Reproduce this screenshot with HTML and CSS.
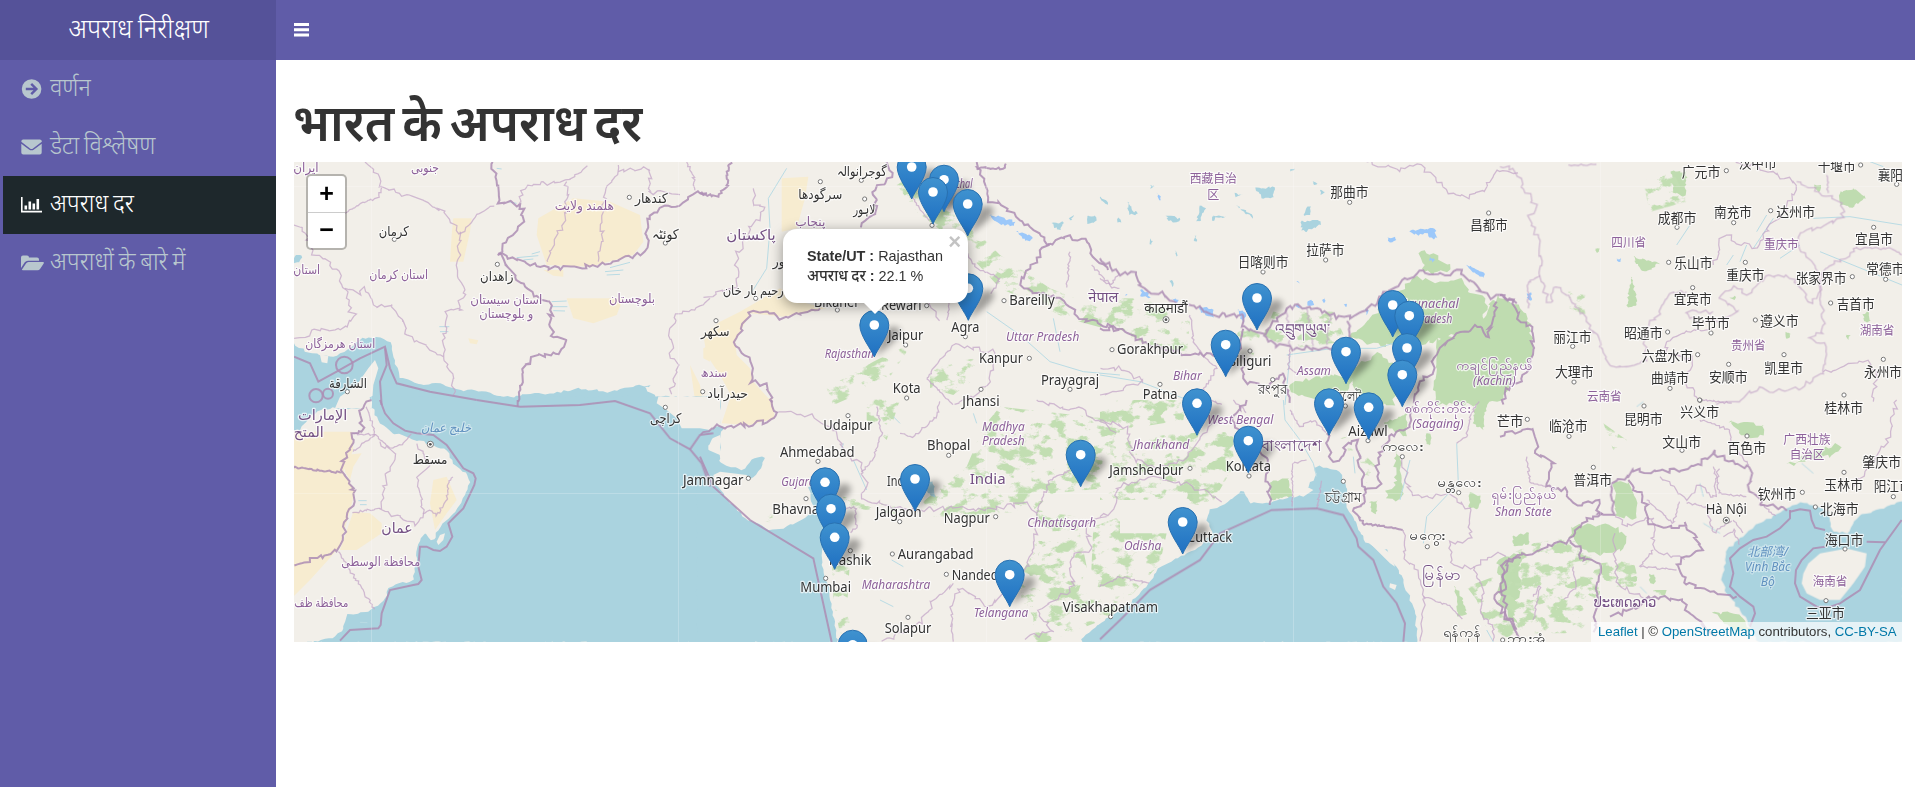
FILE: index.html
```html
<!DOCTYPE html>
<html lang="hi">
<head>
<meta charset="utf-8">
<title>अपराध निरीक्षण</title>
<link rel="stylesheet" href="styles.css">
</head>
<body>
<header class="topbar">
  <a class="logo"><span class="fit fit-logo">अपराध निरीक्षण</span></a>
  <nav class="navbar">
    <svg class="burger" width="15" height="14" viewBox="0 0 15 14"><path d="M0 0h15v3H0zM0 5.3h15v3H0zM0 10.6h15v3H0z"/></svg>
  </nav>
</header>
<div class="body">
  <aside class="sidebar">
    <a class="item">
      <svg class="ico" width="24" height="20" viewBox="0 0 24 20"><circle cx="10.6" cy="10" r="9.8" fill="currentColor"/><path d="M4.8 10h10M10.2 4.8l5.2 5.2-5.2 5.2" fill="none" stroke="#605ca8" stroke-width="2.4"/></svg>
      <span class="fit">वर्णन</span>
    </a>
    <a class="item">
      <svg class="ico" width="24" height="20" viewBox="0 0 24 20"><path fill="currentColor" d="M2.2 2.5h16.6a2 2 0 0 1 2 1.6v.6L12 11.4q-1.5 1-3 0L.3 4.8q0-2.3 1.9-2.3zM.3 6.8l7.7 5.6q2.5 1.7 5 0l7.7-5.6v8.6q0 2-2 2H2.3q-2 0-2-2z"/></svg>
      <span class="fit">डेटा विश्लेषण</span>
    </a>
    <a class="item active">
      <svg class="ico" width="24" height="20" viewBox="0 0 24 20"><path fill="currentColor" d="M0 2h1.600v13.800H21v1.600H0zM3.500 10.500h2.600v4H3.500zM7.500 6.500h2.600v8H7.500zM11.500 8.500h2.600v6h-2.600zM15.500 4h2.600v10.500h-2.600z"/></svg>
      <span class="fit">अपराध दर</span>
    </a>
    <a class="item">
      <svg class="ico" width="24" height="20" viewBox="0 0 24 20"><path fill="currentColor" d="M0 15V4.500Q0 2.500 2 2.500h4q2 0 2 2h8q2 0 2 2v1.300H7q-2 0-3.200 1.500zM1 16.500l4-6Q5.800 9 7.500 9h14.700q1.200.3.500 1.500l-3.500 5.300q-1 1.500-2.700 1.500H2Q.5 17.300 1 16.500z"/></svg>
      <span class="fit">अपराधों के बारे में</span>
    </a>
  </aside>
  <main class="content">
    <h1><span class="fit fit-h">भारत के अपराध दर</span></h1>
    <div class="map">
      <svg class="canvas" viewBox="294 162 1608 480" width="1608" height="480">
        <defs>
          <filter id="forest" x="294" y="162" width="1608" height="480" filterUnits="userSpaceOnUse" color-interpolation-filters="sRGB"><feTurbulence type="fractalNoise" baseFrequency=".06 .085" numOctaves="5" seed="11"/><feColorMatrix values="0 0 0 0 .76  0 0 0 0 .87  0 0 0 0 .7  9 0 0 0 -4.6"/><feComposite operator="in" in2="SourceGraphic"/></filter>
          <filter id="soft" x="-60%" y="-60%" width="220%" height="220%"><feGaussianBlur stdDeviation="3.2"/></filter>
          <linearGradient id="pin" x1="0" y1="0" x2="0" y2="1"><stop offset="0" stop-color="#3f92cf"/><stop offset="1" stop-color="#1f70c2"/></linearGradient>
        </defs>
        <rect class="land" x="294" y="162" width="1608" height="480"/>
        <g id="terrain"></g>
        <g id="forests" filter="url(#forest)"></g>
        <g id="water"></g>
        <g id="lines"></g>
        <path class="grid" d="M371.500 162v480M678.500 162v480M986.500 162v480M1293.500 162v480M1600.500 162v480M294 186.500h1608M294 493.500h1608"/>
        <g id="labels"></g>
        <g id="pins"></g>
      </svg>
      <div class="zoom"><a>+</a><a>−</a></div>
      <div class="popup">
        <span class="close">×</span>
        <div><b>State/UT :</b> Rajasthan</div>
        <div><b class="hi">अपराध दर</b> <b>:</b> 22.1 %</div>
        <i class="tip"></i>
      </div>
      <div class="credit"><a>Leaflet</a> | © <a>OpenStreetMap</a> contributors, <a>CC-BY-SA</a></div>
    </div>
  </main>
</div>
<script src="map.js"></script>
</body>
</html>
```
FILE: styles.css
```css
* { box-sizing: border-box; }
body { margin: 0; height: 787px; overflow: hidden; display: flex; flex-direction: column; background: #fff; font-family: "Liberation Sans", "Noto Sans Devanagari", "Noto Sans", sans-serif; color: #333; }
.topbar { display: flex; height: 60px; background: #605ca8; flex: none; }
.logo { width: 276px; background: #555299; color: #fff; display: flex; justify-content: center; align-items: center; font-size: 27px; line-height: 40px; padding-left: 2px; }
.navbar { flex: 1; padding: 23px 18px; }
.burger { display: block; fill: #fff; }
.body { display: flex; flex: 1; }
.sidebar { width: 276px; background: #605ca8; color: #b8c7ce; font-size: 25px; line-height: 40px; }
.item { display: flex; align-items: center; height: 58px; border-left: 3px solid transparent; padding-left: 18px; gap: 5px; white-space: nowrap; }
.item.active { background: #1e282c; color: #fff; border-left-color: #605ca8; }
.ico { flex: none; margin-top: -1px; }
.fit { display: inline-block; white-space: nowrap; font-weight: 300; word-spacing: -2px; transform-origin: 0 50%; transform: translateY(-2.500px) scaleX(.938); }
.fit-logo { transform-origin: 50% 50%; transform: translateY(-1px) scaleX(.952); }
.content { flex: 1; padding: 0 13px 0 18px; }
h1 { margin: 0; height: 102px; padding: 30px 0 0; font-size: 52px; line-height: 66px; color: #333; }
.fit-h { font-weight: 600; word-spacing: -6px; transform: translateX(-1px) scaleX(.943); }
.map { position: relative; width: 1608px; height: 480px; overflow: hidden; }
.canvas { display: block; }
.land { fill: #f2efe9; }
.sand { fill: #f7ecd0; }
.wood { fill: #bfdcb0; }
.sea { fill: #aad3df; }
.isle { fill: #f2efe9; }
.ice { fill: #9cc8fa; }
.river { fill: none; stroke: #b9dbe4; stroke-width: 3; }
.thin { fill: none; stroke: #c4a7c8; stroke-width: 3.800; opacity: .75; }
.bold { fill: none; stroke: #ad8db4; stroke-width: 6; opacity: .85; }
.grid { fill: none; stroke: #fff; opacity: .22; }
text { text-anchor: middle; paint-order: stroke; stroke: rgba(255,255,255,.7); stroke-width: 2.500px; stroke-linejoin: round; fill: #333; font-family: "Noto Sans", "DejaVu Sans", "Noto Sans CJK SC", sans-serif; font-size: 13.500px; }
.st { fill: #8d619a; font-size: 12.500px; }
.it { fill: #8d619a; font-size: 12.500px; font-style: italic; }
.ct { fill: #745084; font-size: 14.500px; }
.wa { fill: #6292c0; font-size: 12.500px; font-style: italic; stroke: rgba(255,255,255,.4); }
.dot { fill: #fff; stroke: #777; stroke-width: 1; }
.cap { fill: #555; }
.pin { fill: url(#pin); stroke: #2870b0; stroke-width: 1; }
.hole { fill: #fff; }
.shade { fill: #000; opacity: .34; }
.zoom { position: absolute; left: 12px; top: 12px; width: 41px; height: 76px; border: 2px solid rgba(0,0,0,.25); border-radius: 5px; background: #fff; background-clip: padding-box; display: flex; flex-direction: column; font: bold 25px/35px "Liberation Sans", sans-serif; color: #000; text-align: center; }
.zoom a { flex: 1; }
.zoom a + a { border-top: 1px solid #ccc; line-height: 33px; }
.popup { position: absolute; left: 489px; top: 67px; width: 185px; height: 74px; background: #fff; border-radius: 14px; box-shadow: 0 3px 14px rgba(0,0,0,.4); padding: 17px 0 0 24px; font-size: 14.400px; line-height: 20px; white-space: nowrap; }
.popup div { position: relative; z-index: 1; height: 20px; }
.hi { font-weight: 500; font-size: 15.200px; word-spacing: -1px; }
.close { position: absolute; right: 7px; top: 3px; font: bold 22px/20px "Liberation Sans", sans-serif; color: #c3c3c3; }
.tip { position: absolute; left: 80px; top: 73px; width: 24px; height: 12px; background: #fff; clip-path: polygon(0 0, 100% 0, 50% 100%); }
.credit { position: absolute; right: 0; bottom: 0; height: 20px; width: 311px; padding: 0 0 0 7px; background: rgba(255,255,255,.7); font-size: 13.200px; line-height: 19px; white-space: nowrap; }
.credit a { color: #0078a8; }
```
FILE: map.js
```js
// Each sheet has its own origin on the map; its coordinates are thirds of a pixel.
const sheets = [
{ o: [290, 155],
  sea: ["0,560 60,595 130,605 180,580 215,550 265,548 300,560 315,620 330,665 400,690 450,685 520,705 590,710 650,735 700,715 790,715 870,700 960,712 1050,690 1095,720 1110,760 0,760", "1080,690 1070,700 1050,700", "12,305 35,300 30,320 12,325"],
  isle: ["135,760 150,725 200,690 235,640 255,615 265,640 250,690 245,760", "90,600 115,602 112,625 95,622"],
  sand: ["745,190 850,130 960,140 1050,180 1060,260 1030,300 900,335 770,330 740,240", "490,190 545,190 540,230 520,320 480,320 485,240", "760,345 820,345 820,365 790,362", "830,430 1000,430 980,480 910,505 850,490", "1240,580 1260,570 1260,620 1240,610", "535,550 565,556 560,568 540,565", "1200,630 1230,690 1240,750 1215,735"],
  river: ["680,308 745,302 M700,315 730,312 M945,350 1000,345 M950,360 990,358 M960,338 1020,322 M785,440 830,438 M785,455 832,455 M790,467 825,468 M448,515 478,515 M450,530 475,530 M620,40 635,42 M655,140 680,145 M725,297 750,290"],
  bold: ["608,21 625,140 695,150 700,200 625,295 755,340 890,335 970,320 1070,290 1075,190 1110,160 1185,145 1215,115 1260,115", "625,295 680,370 720,415 780,440 785,540 825,545 815,590 740,605 700,635 683,750"],
  mar: ["12,605 60,625 85,680 140,650 210,610 285,575 300,640 320,685 420,710 560,735", "285,580 290,630 270,680 275,750"],
  rings: [[163,630,25],[78,722,20],[114,716,15]],
  thin: ["225,21 275,80 275,98 390,130 470,180 510,230 545,210 560,180 620,150", "275,98 265,130 225,140 165,175", "510,230 505,350 525,420 505,440 515,465 465,465 465,560 460,600 490,660 490,730", "12,210 40,220 75,300 110,310 140,350 165,400 180,470 200,480 165,520 60,525 50,545 12,550", "165,400 210,415 225,400 240,440 260,455 300,445 320,480 345,500 350,540 460,605", "685,150 690,120 715,90 830,80 850,70 900,25", "830,80 830,190 800,240 770,330", "985,30 975,80 945,100 935,250 925,320", "985,50 1080,40 1085,70 1070,100 1080,110 1180,120", "1190,21 1210,60 1215,110", "1260,430 1220,460 1160,480 1140,530 1145,600 1165,640 1145,700 1145,725"],
  t: [[48,36,76,"ایران","st"],[405,36,84,"جنوبی","st"],[311,228,90,"کرمان"],[326,358,176,"استان کرمان","st"],[50,343,80,"استان","st"],[883,152,178,"هلمند ولایت","st"],[1084,130,98,"کندهار"],[1126,237,80,"کوئٹہ"],[620,364,100,"زاهدان"],[649,432,216,"استان سیستان","st"],[649,475,162,"و بلوچستان","st"],[1026,430,138,"بلوچستان","st"],[151,564,210,"استان هرمزگان","st"],[174,684,114,"الشارقة"]],
  d: [[313,253],[1018,127],[1126,264],[622,328],[172,710]] },
{ o: [290, 400],
  sea: ["240,-10 260,60 300,95 370,120 420,130 470,150 490,190 535,225 540,250 520,300 480,350 450,380 430,425 405,400 385,425 375,500 370,540 300,560 275,610 240,635 170,645 160,690 120,715 50,728 1290,728 1290,-10", "0,-10 150,-10 100,25 60,50 30,90 0,95"],
  isle: ["1105,-10 1100,10 1130,30 1160,55 1175,85 1230,85 1290,95 1290,-10", "465,400 460,420 445,435 440,425 450,405", "1255,120 1290,105 1290,165 1255,150"],
  sand: ["0,95 185,95 190,150 160,215 195,275 150,440 60,540 0,600", "190,335 240,340 275,370 275,400 200,450 150,450", "430,240 470,230 500,300 470,340 435,390 420,310", "165,165 215,160 190,200 180,240 165,215"],
  river: ["205,302 230,302 M210,314 230,314 M210,667 232,668"],
  bold: ["245,0 205,30 220,90 185,105 190,130 160,180 160,215 195,275 145,450 12,497", "12,203 160,218"],
  mar: ["270,0 285,40 310,70 345,92 380,100 430,105 470,135 495,170 520,205 550,220 557,235 553,255 520,325 475,370 487,410 470,440 450,453 430,450 410,440 390,440 385,500 395,540 385,552 370,555 300,570 275,640 272,675 265,685 180,690 150,722", "560,0 690,20 870,15 975,3 1080,40 1140,115 1200,148 1235,190 1260,260", "683,20 683,0", "1200,148 1230,105 1270,100"],
  thin: ["230,20 255,100 300,145 340,130 365,100", "190,155 255,105 185,100", "270,125 320,165 290,230 270,330 380,372 398,335 385,230 420,195 380,130", "270,325 185,338", "398,340 420,330 440,345 470,300 475,240 490,230", "145,455 255,630"],
  t: [[98,45,148,"الإمارات","ct"],[56,97,90,"المتح","ct"],[468,82,150,"خليج عمان","wa"],[420,177,104,"مسقط"],[321,386,94,"عمان","ct"],[272,484,236,"محافظة الوسطى","st"],[94,607,162,"محافظة ظف","st"],[1127,56,94,"کراچی"],[1270,240,182,"Jamnagar"]],
  d: [[1126,22],[1375,235]], cap: [[421,133]] },
{ o: [700, 155],
  sand: ["245,70 325,65 315,130 290,220 245,230", "120,470 240,400 300,440 380,460 250,485 150,475 105,560 110,600 150,640 160,680 210,735 215,752 110,752 60,660 20,600 10,540 60,500"],
  haze: ["590,90 640,60 800,200 900,300 1050,400 1250,480 1250,530 1100,490 900,400 780,270 650,170", "690,650 760,620 830,610 850,650 760,720 690,700", "380,700 520,620 640,560 560,680 400,750"],
  ice: ["870,180 900,185 945,200 940,215 890,205", "950,230 1000,245 990,260 960,245"],
  sea: ["1055,205 1090,200 1080,222 1060,220", "1160,185 1185,180 1190,200 1165,205", "1105,190 1120,180 1115,200"],
  river: ["260,40 205,130 210,220 200,340 150,420 M540,330 640,300 M860,470 960,540 1050,620 1150,650 1260,660 M1060,490 1080,590"],
  bold: ["0,115 50,125 80,100 85,30 100,21", "560,21 580,65 520,105 530,170 480,220", "360,460 250,490 200,470 150,475 100,570 150,610 155,680 200,690 220,750", "830,21 870,150 900,145 960,190 1030,250 1050,270 1090,240 1160,260 1180,310 1230,350", "1045,265 970,370 965,400 1080,430 1150,490 1260,525", "830,40 910,40 920,21"],
  thin: ["160,100 160,150 200,160 150,220 110,300 110,400 0,430", "560,290 620,340 700,460 720,500", "780,270 830,340 900,370 870,420", "760,570 880,590 870,680 830,720 760,750", "700,400 750,440 740,500", "760,570 700,640 680,670 760,750", "1110,290 1100,400", "1175,330 1240,400 1260,400", "600,60 640,130 690,200"],
  t: [[485,48,150,"گوجرانوالہ"],[361,118,132,"سرگودھا"],[493,163,66,"لاہور"],[331,199,90,"پنجاب","st"],[153,241,148,"پاکستان","ct"],[236,318,36,"ور"],[160,406,184,"رحیم یار خان"],[410,441,136,"Bikaner"],[604,452,122,"Rewari"],[46,530,86,"سکھر"],[42,653,80,"سندھ","st"],[83,715,122,"حیدرآباد"],[996,437,136,"Bareilly"],[796,517,84,"Agra"],[617,541,106,"Jaipur"],[448,595,148,"Rajasthan","it"],[1028,545,220,"Uttar Pradesh","it"],[903,611,132,"Kanpur"],[1110,676,174,"Prayagraj"],[620,700,84,"Kota"],[843,739,112,"Jhansi"],[1210,428,90,"नेपाल","ct"],[760,86,116,"Himachal","it"]],
  d: [[361,80],[484,76],[494,132],[696,211],[412,465],[680,452],[48,497],[8,710],[912,437],[796,545],[617,570],[988,610],[1110,703],[620,729],[843,703],[167,430]] },
{ o: [700, 400],
  sea: ["-10,105 20,100 50,75 75,85 40,110 20,140 45,175 80,200 130,210 160,175 200,170 175,215 145,240 60,240 75,290 130,350 210,390 260,380 320,350 345,335 325,260 345,240 420,260 370,330 400,400 370,440 365,500 385,560 400,640 415,728 -10,728", "1150,728 1145,715 1190,680 1230,655 1260,645 1260,728", "680,240 700,245 705,290 680,280"],
  isle: ["60,215 140,225 150,245 120,265 75,285 45,250 40,225"],
  sand: ["90,-5 215,-5 225,55 150,75 65,70"],
  haze: ["430,290 640,330 700,280 800,200 850,80 900,20 1260,60 1260,260 1060,280 1000,330 800,350 650,350 430,320", "395,430 450,480 440,640 470,726 425,726 400,600", "500,-20 600,0 560,120 500,60", "180,340 240,345 220,370 180,360", "1000,600 1230,560 1260,640 1040,726 1000,726", "1010,330 1130,350 1160,500 1120,620 1000,650 940,560 1000,460", "1180,380 1260,350 1260,600 1170,600"],
  river: ["460,180 500,270 M540,600 580,620 M575,480 610,500 M430,130 420,170 M820,40 830,70 M580,50 600,70"],
  bold: ["215,0 230,60 140,75 40,80 0,105"],
  mar: ["0,170 40,260 150,360 340,475 395,726"],
  thin: ["230,38 330,45 400,80 430,150 480,190 500,250 480,290 540,310 620,330 760,325 830,330 980,310 1010,340 1000,460 960,530 870,620 780,560 750,640 760,726", "530,20 545,100 520,180 480,220", "760,550 700,600 660,670 600,700 540,726", "600,100 640,110 710,50 720,0", "1010,340 1050,240 1110,210", "1220,350 1160,370 1170,450 1110,470 1120,560 1010,640 1060,690 970,720", "1010,0 1080,20 1150,30 1250,100", "420,330 465,320 470,380 450,400"],
  t: [[444,77,148,"Udaipur"],[352,158,224,"Ahmedabad"],[300,243,112,"Gujarat","it"],[746,136,130,"Bhopal"],[910,78,128,"Madhya","it"],[910,121,128,"Pradesh","it"],[863,237,108,"India","ct"],[319,327,204,"Bhavnagar"],[612,243,102,"Indore"],[596,338,138,"Jalgaon"],[800,354,138,"Nagpur"],[1085,368,206,"Chhattisgarh","it"],[707,464,228,"Aurangabad"],[450,480,128,"Nashik"],[825,526,140,"Nanded"],[377,563,152,"Mumbai"],[588,552,206,"Maharashtra","it"],[624,685,140,"Solapur"],[903,636,164,"Telangana","it"],[1231,621,286,"Visakhapatnam"]],
  d: [[444,47],[354,184],[746,166],[318,296],[599,365],[887,350],[577,462],[451,452],[739,523],[377,535],[624,652],[1232,650]] },
{ o: [1100, 155],
  sea: ["465,100 525,95 520,125 490,130", "605,200 660,195 665,205 620,230 605,225", "200,180 240,190 240,202 205,198", "300,150 315,160 300,200 290,200", "340,180 380,185 350,190 335,197", "85,140 95,170 115,172 105,180 85,178", "410,150 455,180 460,190 430,170", "620,155 635,152 628,180 610,185", "0,128 20,135 25,148 5,138", "150,250 158,265 150,270", "285,240 292,260 283,262", "210,375 222,380 220,395", "225,285 232,300 227,303", "405,115 430,120 408,125", "570,42 585,45 572,50", "640,80 652,84 645,92", "660,105 675,110 665,118", "55,185 62,200 52,205", "150,90 165,92 152,100"],
  ice: ["930,225 1005,220 1010,250 990,250 985,235 950,240 935,235", "865,250 890,245 885,258 865,260", "1100,330 1155,355 1150,368 1115,350", "300,455 340,465 340,490 300,470", "990,305 1005,312 1000,322 990,316", "620,440 640,435 640,450 620,455", "220,430 235,430 232,445 220,442", "170,115 185,120 180,138", "120,400 145,415 150,430 125,425", "795,460 805,460 800,480", "730,445 740,445 738,458", "665,435 678,430 672,443", "415,465 438,470 430,505 420,480", "580,450 600,450 598,462", "588,376 600,378 596,386", "75,415 84,417 80,423"],
  wood: ["750,545 820,480 860,440 950,365 1010,385 1080,370 1120,420 1160,430 1150,530 1060,540 1000,560 900,570 810,568", "960,290 1010,300 1050,340 1010,360 970,345", "1180,430 1260,470 1260,620 1200,740 1110,750 1005,750 1005,555 1130,520", "570,690 660,665 760,660 730,720 650,728 570,715", "740,650 840,595 900,640 880,750 800,750 760,700"],
  haze: ["0,430 130,430 270,500 260,600 150,570 0,510", "520,470 700,470 740,560 560,580 490,540", "430,500 480,540 460,600 400,560"],
  river: ["560,600 700,580 830,580 880,565 M570,600 560,700 555,750 M0,660 120,680 250,730"],
  bold: ["0,310 60,355 100,350 120,400 180,415 240,450 300,460 340,480 430,480 430,520 480,530 490,540 560,455 640,455 690,480 740,490 800,465 850,420 960,350 1040,360 1080,345 1140,410 1180,430 1200,420 1260,450", "0,520 60,520 130,560 220,590 310,600 420,590 430,520", "490,540 530,570 570,580 740,575 750,545 740,490", "1190,440 1160,550 1140,510 1060,545 1000,600 1000,650 960,680 940,750", "430,600 430,680 500,700 550,650 570,750"],
  thin: ["800,21 900,45 960,30 1010,70 1040,110 1100,125 1150,110 1190,40 1260,55", "270,480 280,560 310,600", "0,370 30,390 60,355", "310,600 350,640 300,720 370,750", "0,720 130,680 60,640 0,640", "570,580 565,640 600,660", "560,460 570,575", "620,460 640,575", "690,480 680,575"],
  t: [[340,70,142,"西藏自治","st"],[340,118,36,"区","st"],[748,112,114,"那曲市"],[1167,212,112,"昌都市"],[489,321,152,"日喀则市"],[676,286,114,"拉萨市"],[198,461,130,"काठमाडौं"],[608,524,164,"འབྲུགཡུལ་","ct"],[150,584,198,"Gorakhpur"],[262,661,86,"Bihar","it"],[180,717,104,"Patna"],[450,618,128,"Siliguri"],[642,647,102,"Assam","it"],[518,702,90,"রংপুর"],[990,446,172,"Arunachal","it"],[1000,489,114,"Pradesh","it"],[1182,631,226,"ကချင်ပြည်နယ်","st"],[1183,676,128,"(Kachin)","it"],[740,724,90,"সিলেট"]],
  d: [[749,142],[1166,174],[489,351],[677,315],[36,584],[450,588],[518,674],[180,688]], cap: [[198,494]] },
{ o: [1100, 400],
  sea: ["-40,728 -52,715 0,670 32,650 100,600 150,545 180,500 240,470 300,440 340,400 320,360 330,330 380,310 430,270 450,310 510,310 540,300 600,285 650,230 640,200 660,200 720,215 740,270 735,310 770,370 800,430 860,450 900,520 925,580 945,640 950,690 955,728"],
  isle: ["760,335 790,330 800,380 830,430 870,460 885,500 870,490 820,440 775,390", "870,550 890,555 885,570 868,562", "580,280 600,250 640,270 610,290"],
  wood: ["885,140 905,180 905,300 860,300 862,265 885,260", "510,245 565,235 575,290 510,300", "1130,0 1160,0 1150,90 1120,70", "1065,560 1085,590 1100,640 1075,650", "1200,500 1262,460 1262,560 1220,560", "810,305 830,300 830,345 812,330", "850,70 920,40 920,110 880,90", "980,100 992,100 990,135 978,130", "1110,280 1145,290 1130,330 1105,320", "260,255 300,260 295,310 262,300"],
  haze: ["0,120 400,90 400,200 330,320 200,300 0,300", "40,400 200,400 180,490 100,580 0,640 0,420", "0,0 260,0 250,60 0,100", "700,120 740,110 830,200 800,250 780,180", "1100,560 1262,500 1262,726 1160,690 1130,600"],
  river: ["550,0 555,60 600,120 640,190 650,230 M1070,130 1075,250 980,350 970,430 M930,180 900,300 M760,170 765,220 M1160,690 1180,726"],
  bold: ["440,0 400,50 420,120 490,160 500,200 510,325", "680,100 690,170 720,190 740,130 770,125 790,260 795,310", "940,20 920,90 870,110 830,180 840,250 790,270", "1262,475 1210,490 1215,570 1185,590 1225,660 1262,720", "795,310 760,330 790,370 850,380 910,390"],
  mar: ["0,718 60,660 150,570 300,480 330,440 360,400 515,330 650,325 730,345 770,415 775,440 820,480 850,560 890,610 915,670 910,726"],
  thin: ["0,60 80,80 100,180 180,200 250,180 320,90 370,60", "0,350 40,330 50,260 150,230 250,250 330,280 370,310", "400,0 440,40", "570,30 600,80 640,60 680,100", "577,320 577,190 620,180", "650,325 665,240", "905,170 930,280 1000,290 1050,280 1110,330 1110,420 1050,430 1060,500 1120,500 1190,460 1220,470", "1070,130 1100,110 1110,50 1140,0", "910,390 920,480 960,520 970,610 960,726", "970,590 1050,620 1090,660", "1120,500 1150,570 1140,640 1180,680 1180,726", "0,560 60,530 150,550"],
  t: [[421,59,198,"West Bengal","it"],[184,132,168,"Jharkhand","it"],[574,138,184,"বাংলাদেশ","ct"],[139,210,222,"Jamshedpur"],[445,198,136,"Kolkata"],[804,94,118,"Aizawl"],[908,138,124,"ကလေး"],[1015,25,198,"စစ်ကိုင်းတိုင်း","st"],[1014,71,154,"(Sagaing)","it"],[1077,247,130,"မန္တလေး"],[730,292,110,"চট্টগ্রাম"],[982,407,108,"မကွေး"],[1025,525,118,"မြန်မာ","ct"],[329,413,134,"Cuttack"],[128,436,112,"Odisha","it"],[1085,697,114,"ရန်ကုန်"]],
  d: [[270,205],[447,228],[736,18],[804,122],[907,170],[730,244],[1076,278],[982,440]] },
{ o: [1500, 155],
  wood: ["-5,420 50,450 90,500 100,600 70,630 -5,600", "515,50 560,50 555,125 520,110", "1020,110 1060,100 1097,125 1060,157 1020,150", "400,305 480,325 430,352 405,320", "395,365 408,420 410,450 380,455", "1090,480 1105,465 1110,500 1092,500", "945,90 962,88 962,110 945,105", "860,530 872,535 865,552 858,545", "285,280 300,280 290,292", "690,425 708,425 700,436", "1035,540 1050,540 1045,553"],
  haze: ["205,410 255,420 255,480 210,460", "430,80 520,50 560,140 450,170"],
  ice: ["350,312 362,310 362,324 350,322", "80,415 95,415 95,435 85,438"],
  river: ["800,180 770,230 M820,190 760,280 M700,300 680,330 M740,270 720,320 M570,210 530,270 M940,190 1050,185 1206,210 M960,290 1206,390 M1110,20 1150,35 M840,310 900,270"],
  bold: ["0,420 40,440 60,500 95,510 95,620 60,680 20,700 10,750"],
  thin: ["0,35 40,45 70,100 105,150 90,180 120,280 125,380 150,450 170,390 210,430 250,480 300,560 320,620 360,640 440,610 430,540 490,450 510,410 560,410", "85,460 85,380 125,360", "640,330 660,290 650,260 680,240 720,265 770,280 810,210 830,200 890,110 880,80 760,30 700,21", "890,80 940,100 1020,140 1030,190 930,225 890,240 900,290 940,330 960,370 960,430 930,440 880,370 800,360 740,420 700,390 660,430 715,470 680,490 590,500 560,470 640,470", "1060,280 1060,300 980,330 960,370 970,530 925,555 980,570 970,650 900,700 820,710 770,695 720,740 640,750", "1060,280 1170,280 1206,300", "980,60 985,115", "500,560 560,530 640,520", "500,560 500,600 580,610 560,680 600,740", "970,650 1100,620 1130,660 1120,740", "205,30 290,28"],
  t: [[603,52,116,"广元市"],[773,26,114,"汉中市"],[1010,34,114,"十堰市"],[1190,60,114,"襄阳市"],[531,190,116,"成都市"],[699,173,114,"南充市"],[887,171,116,"达州市"],[386,261,104,"四川省","st"],[844,267,104,"重庆市","st"],[1122,254,114,"宜昌市"],[580,326,114,"乐山市"],[736,360,114,"重庆市"],[963,369,152,"张家界市"],[1156,343,114,"常德市"],[578,434,114,"宜宾市"],[1067,449,114,"吉首市"],[632,506,114,"毕节市"],[838,499,116,"遵义市"],[430,535,116,"昭通市"],[217,546,114,"丽江市"],[1131,527,104,"湖南省","st"],[745,570,104,"贵州省","st"],[502,603,154,"六盘水市"],[223,653,116,"大理市"],[510,670,114,"曲靖市"],[685,667,116,"安顺市"],[851,639,116,"凯里市"],[1149,653,114,"永州市"],[313,725,104,"云南省","st"]],
  d: [[679,47],[1082,30],[1190,88],[531,217],[701,203],[812,167],[1121,217],[506,322],[736,322],[1057,365],[1157,373],[578,398],[992,444],[633,534],[766,495],[503,531],[218,574],[593,599],[222,681],[510,700],[686,628],[852,599],[1150,613],[600,736],[1032,720]] },
{ o: [1500, 400],
  sea: ["680,450 740,400 770,370 830,345 870,320 910,305 960,320 990,335 995,390 1040,400 1060,370 1080,345 1150,325 1210,300 1210,728 775,728 740,660 680,580 665,540 675,490"],
  isle: ["910,520 925,490 960,460 1040,445 1100,460 1095,500 1060,550 1020,600 960,600 920,580 905,550", "985,340 1045,330 1060,370 1045,395 1000,395"],
  wood: ["-5,480 50,460 60,560 40,640 60,690 0,610", "345,240 380,245 415,300 410,355 345,350 340,290", "215,380 330,370 385,410 370,450 300,465 240,440 210,410", "690,65 790,72 785,110 730,112", "865,195 960,150 1020,130 1020,160 900,190", "920,540 940,540 940,570 920,575", "40,410 90,395 85,430 40,440", "385,530 410,530 410,545 385,545", "450,525 465,525 465,550 450,550", "640,640 720,640 750,690 700,690"],
  haze: ["-5,480 100,430 210,410 300,490 300,600 240,700 60,700 -5,600", "300,490 400,480 420,560 310,560", "420,570 500,570 490,600 420,590", "310,70 380,120 340,150"],
  river: ["600,250 610,290 M410,20 430,5 M610,370 660,400 M420,560 440,580 M905,190 940,220"],
  bold: ["0,110 30,95 105,90 110,160 160,185 140,260 190,270 220,315 290,300 300,345 240,370 210,420 120,450 20,480 5,560 20,640 50,690", "290,345 345,350 335,250 385,235 400,210 500,215 590,200 640,155 680,185 750,205 750,270 790,310 870,335", "385,240 440,310 440,370 500,385 560,370 605,445 530,490 560,550 640,580 720,590", "210,420 240,440 240,475 300,490 290,640 280,700", "330,650 420,620 440,590 540,600 580,650 650,710"],
  mar: ["870,330 870,355 840,385 800,410 760,420 720,445 690,475 700,520 690,560 720,590 760,620 765,640 750,680", "870,335 900,328 930,332 935,360 945,383 975,390", "975,440 940,445 905,480 888,510 885,550 900,590 950,620 985,622 1020,610 1080,570 1140,450 1205,360", "1100,425 1155,427"],
  thin: ["80,170 90,250 140,260", "480,230 560,300 600,250 640,300 660,200", "440,300 520,370 540,300", "560,310 620,320 640,400 700,360", "640,200 660,280 740,290", "345,350 380,380 460,350 460,450 560,480", "345,400 350,550 440,600", "460,450 420,500 530,510", "700,360 730,400", "670,410 700,390 720,440", "600,60 690,90 690,130 750,200", "1190,0 1160,130 1120,180 1060,260", "780,310 830,350", "100,590 120,560 100,660", "600,0 700,10", "220,500 230,560 190,600"],
  t: [[430,57,116,"昆明市"],[599,38,116,"兴义市"],[1031,24,116,"桂林市"],[30,64,80,"芒市"],[205,80,116,"临沧市"],[545,126,116,"文山市"],[740,145,116,"百色市"],[921,117,142,"广西壮族","st"],[921,164,104,"自治区","st"],[1145,188,116,"肇庆市"],[278,242,116,"普洱市"],[1031,257,116,"玉林市"],[1178,259,114,"阳江市"],[831,284,116,"钦州市"],[679,327,124,"Hà Nội"],[1018,328,116,"北海市"],[70,284,194,"ရှမ်းပြည်နယ်","st"],[70,333,170,"Shan State","it"],[1032,420,116,"海口市"],[803,455,122,"北部湾/","wa"],[803,499,136,"Vịnh Bắc","wa"],[803,543,42,"Bộ","wa"],[990,543,104,"海南省","st"],[976,641,116,"三亚市"],[375,606,188,"ປະເທດລາວ","ct"],[78,716,116,"ဘားအံ"]],
  d: [[432,18],[599,0],[82,58],[207,109],[546,151],[741,108],[280,202],[1032,217],[1180,290],[907,277],[946,321],[1035,447],[978,602],[8,720]], cap: [[679,361]] }
];
// Pins: [sheet, x, y of the round hole], north to south.
const pins = [[2,635,36],[2,732,74],[2,699,111],[2,803,147],[2,805,400],[4,471,429],[4,878,450],[4,928,482],[2,523,510],[4,377,569],[4,921,579],[4,738,590],[4,907,659],[4,291,745],[4,687,745],[4,806,757],[5,445,122],[3,1142,164],[3,645,237],[3,375,247],[3,393,326],[5,248,366],[3,404,412],[3,929,524],[3,458,734]];

const $ = id => document.getElementById(id);
const out = { terrain: "", forests: "", water: "", lines: "", labels: "" };
const poly = (list, c) => (list || []).map(p => `<path class="${c}" d="M${p}Z"/>`).join("");
const line = (list, c) => (list || []).map(p => `<path class="${c}" d="M${p}"/>`).join("");
for (const s of sheets) {
  const wrap = (body, cls = "") => `<g class="${cls}" transform="translate(${s.o[0]} ${s.o[1]}) scale(.33333)">${body}</g>`;
  out.terrain += wrap(poly(s.sand, "sand") + poly(s.wood, "wood"));
  out.forests += wrap(poly(s.haze, "wood"));
  out.water += wrap(poly(s.sea, "sea") + poly(s.isle, "isle") + poly(s.ice, "ice") + line(s.river, "river"));
  out.lines += wrap(line(s.thin, "thin") + line(s.bold, "bold"), "jag") +
    wrap(line(s.mar, "bold") + (s.rings || []).map(r => `<circle class="bold" cx="${r[0]}" cy="${r[1]}" r="${r[2]}"/>`).join(""));
  for (const d of s.d || []) out.labels += `<circle class="dot" cx="${s.o[0] + d[0] / 3}" cy="${s.o[1] + d[1] / 3}" r="2.1"/>`;
  for (const d of s.cap || []) { const x = s.o[0] + d[0] / 3, y = s.o[1] + d[1] / 3; out.labels += `<circle class="dot" cx="${x}" cy="${y}" r="3.1"/><circle class="cap" cx="${x}" cy="${y}" r="1.4"/>`; }
  for (const [x, y, w, t, c] of s.t) out.labels += `<text class="${c || "city"}" x="${(s.o[0] + x / 3).toFixed(1)}" y="${(s.o[1] + y / 3 + 4.7).toFixed(1)}" textLength="${(w / 3).toFixed(1)}" lengthAdjust="spacingAndGlyphs">${t}</text>`;
}
for (const k in out) $(k).innerHTML = out[k];

// Subdivide borders and coasts and shift each point a little so that they look surveyed.
let seed = 7;
const rnd = () => (seed = (seed * 16807) % 2147483647) / 2147483647 - .5;
document.querySelectorAll(".jag path, #water .sea, #water .ice, #terrain .wood").forEach(p => {
  const n = p.getTotalLength(), closed = /Z$/.test(p.getAttribute("d")), pts = [];
  const small = n < 250, step = small ? 6 : 11;
  const amp = small ? 7 : p.classList.contains("sea") ? 7 : closed ? 14 : 15;
  for (let l = 0; l < n; l += step) { const q = p.getPointAtLength(l); const e = !closed && (l < 1 || n - l < 12); pts.push((q.x + (e ? 0 : rnd() * amp)).toFixed(1) + "," + (q.y + (e ? 0 : rnd() * amp)).toFixed(1)); }
  p.setAttribute("d", "M" + pts.join(" ") + (closed ? "Z" : ""));
});

const drop = "M0 32C-3 24-14.500 11-14.500 0A14.500 14.500 0 0 1 14.500 0C14.500 11 3 24 0 32Z";
const at = p => { const o = sheets[p[0]].o; return `translate(${(o[0] + p[1] / 3).toFixed(1)} ${(o[1] + p[2] / 3).toFixed(1)})`; };
$("pins").innerHTML =
  pins.map(p => `<g transform="${at(p)}"><path class="shade" filter="url(#soft)" d="M1 31L9 8Q20-4 26 6Q26 14 1 31Z"/></g>`).join("") +
  pins.map(p => `<g transform="${at(p)}"><path class="pin" d="${drop}"/><circle class="hole" r="4.800"/></g>`).join("");
```
